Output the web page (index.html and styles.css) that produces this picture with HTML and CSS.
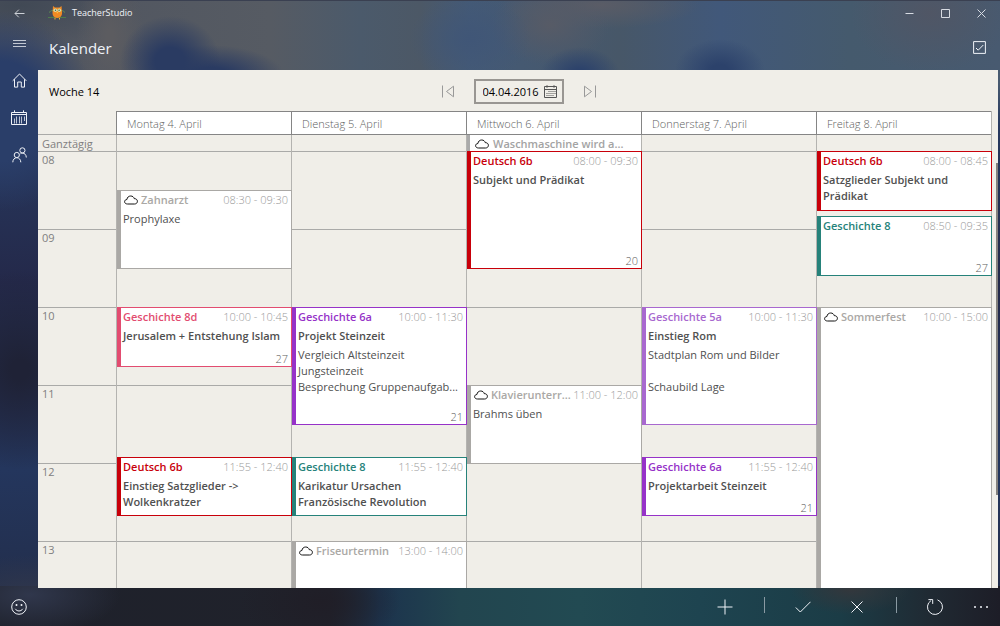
FILE: index.html
```html
<!DOCTYPE html>
<html lang="de">
<head>
<meta charset="utf-8">
<meta name="viewport" content="width=device-width, initial-scale=1">
<title>TeacherStudio</title>
<link rel="stylesheet" href="styles.css">
</head>
<body>
<svg class="sprite" aria-hidden="true">
  <symbol id="cloud" viewBox="0 0 14 10"><path d="M3.6 9C1.8 9 .6 8.1.6 6.7c0-1.300 1-2.100 2.300-2.200C3.200 2.300 4.700 1 6.700 1c1.800 0 3.100 1 3.500 2.600 1.900 0 3.200 1.100 3.200 2.700S12.200 9 10.500 9z"/></symbol>
</svg>
<div class="app">
  <header class="titlebar">
    <button class="back" aria-label="Zurück"><svg width="11" height="9" viewBox="0 0 11 9"><path d="M10.500 4.500H1M4.800.7 1 4.500l3.800 3.800"/></svg></button>
    <svg class="logo" width="18" height="14" viewBox="0 0 18 14" aria-hidden="true">
      <path d="M0 11.500h18" stroke="#4e7d4c" stroke-width="1"/>
      <path d="M1 6.500c2-2 3.500-2.500 5-1.500M17 6.500c-2-2-3.500-2.500-5-1.500" stroke="#5f8f55" fill="none"/>
      <path d="M5 0l2 1.500h4.500L13.500 0 14 5.500c.4 3.500-.8 6.500-4.700 6.500S4.200 9 4.600 5.500z" fill="#f08a24"/>
      <circle cx="7.300" cy="4.300" r="1.800" fill="#cfe3b4"/><circle cx="11.300" cy="4.300" r="1.800" fill="#cfe3b4"/>
      <circle cx="7.500" cy="4.300" r=".7" fill="#4a5a3c"/><circle cx="11.100" cy="4.300" r=".7" fill="#4a5a3c"/>
      <path d="M8.500 6h1.600l-.8 1.500z" fill="#ffd24a"/>
      <path d="M7 12v1.500M11.500 12v1.500" stroke="#f0b030"/>
    </svg>
    <span class="app-name">TeacherStudio</span>
    <div class="window-controls">
      <button aria-label="Minimieren"><svg width="9" height="9" viewBox="0 0 9 9"><path d="M.5 4.500h8"/></svg></button>
      <button aria-label="Maximieren"><svg width="9" height="9" viewBox="0 0 9 9"><path d="M.5.5h8v8h-8z"/></svg></button>
      <button aria-label="Schließen"><svg width="9" height="9" viewBox="0 0 9 9"><path d="M.5.5l8 8M8.500.5l-8 8"/></svg></button>
    </div>
  </header>

  <div class="body">
    <nav class="sidebar" aria-label="Navigation">
      <button aria-label="Menü"><svg class="thin" width="13" height="9" viewBox="0 0 13 9"><path d="M0 1.500h13M0 4.500h13M0 7.500h13"/></svg></button>
      <button aria-label="Start"><svg width="15" height="15" viewBox="0 0 15 15"><path d="M.7 7.800 7.500 1l6.800 6.800M2.500 6.200v7.900h3.200V9h3.600v5.100h3.200V6.200"/></svg></button>
      <button aria-label="Kalender"><svg width="16" height="16" viewBox="0 0 16 16"><path d="M.5 2.500h15v12H.5zM.5 4.500h15M3.500.3V3M12.500.3V3"/><path class="thin" d="M3.500 8.500v5M5.500 6.500v7M8.500 6.500v7M10.500 6.500v7M13.500 6.500V11"/></svg></button>
      <button aria-label="Schüler"><svg width="15" height="16" viewBox="0 0 15 16"><circle cx="4.800" cy="8" r="2.600"/><circle cx="10.400" cy="3.400" r="2.600"/><path d="M.8 15.300c0-2.600 1.700-4.600 4-4.600s4 2 4 4.600M8.500 6.700c.6-.4 1.200-.6 1.900-.6 2.300 0 3.900 1.800 3.900 4.400"/></svg></button>
    </nav>

    <div class="content">
      <div class="page-head">
        <h1>Kalender</h1>
        <button class="select-mode" aria-label="Auswählen"><svg width="13" height="13" viewBox="0 0 13 13"><path d="M.6.6h11.800v11.800H.6z"/><path d="M3 7l2.200 2.200L10.300 4"/></svg></button>
      </div>

      <main class="panel">
        <div class="toolbar">
          <h2>Woche 14</h2>
          <div class="date-nav">
            <button aria-label="Vorherige Woche"><svg width="14" height="13" viewBox="0 0 14 13"><path d="M1.500.5v12M12.500 1.200v10.600L5.500 6.500z"/></svg></button>
            <div class="date-field">
              <input type="text" value="04.04.2016" aria-label="Datum">
              <button aria-label="Datum wählen"><svg width="13" height="13" viewBox="0 0 13 13"><path d="M.5 1.500h12v11H.5zM.5 4.500h12M3 .2v2.600M10 .2v2.600"/><path class="dots" d="M4.500 6.500h7M2.500 8.500h9M2.500 10.500h7"/></svg></button>
            </div>
            <button aria-label="Nächste Woche"><svg width="14" height="13" viewBox="0 0 14 13"><path d="M12.500.5v12M1.500 1.200v10.600l7-5.300z"/></svg></button>
          </div>
        </div>

        <div class="week">
          <div class="corner"></div>
          <h3 class="day-name">Montag 4. April</h3>
          <h3 class="day-name">Dienstag 5. April</h3>
          <h3 class="day-name">Mittwoch 6. April</h3>
          <h3 class="day-name">Donnerstag 7. April</h3>
          <h3 class="day-name">Freitag 8. April</h3>

          <div class="all-day-label">Ganztägig</div>
          <div class="all-day"></div>
          <div class="all-day"></div>
          <div class="all-day all-day-busy"><svg class="cloud"><use href="#cloud"/></svg><span>Waschmaschine wird a...</span></div>
          <div class="all-day"></div>
          <div class="all-day"></div>

          <div class="hours">
            <span>08</span><span>09</span><span>10</span><span>11</span><span>12</span><span>13</span>
          </div>

          <div class="day">
            <article class="event private" style="grid-row:7 / span 12">
              <header><svg class="cloud"><use href="#cloud"/></svg><b>Zahnarzt</b><time>08:30 - 09:30</time></header>
              <p>Prophylaxe</p>
            </article>
            <article class="event pink" style="grid-row:25 / span 9">
              <header><b>Geschichte 8d</b><time>10:00 - 10:45</time></header>
              <h4>Jerusalem + Entstehung Islam</h4>
              <span class="count">27</span>
            </article>
            <article class="event red" style="grid-row:48 / span 9">
              <header><b>Deutsch 6b</b><time>11:55 - 12:40</time></header>
              <h4>Einstieg Satzglieder -&gt;<br>Wolkenkratzer</h4>
            </article>
          </div>

          <div class="day">
            <article class="event purple" style="grid-row:25 / span 18">
              <header><b>Geschichte 6a</b><time>10:00 - 11:30</time></header>
              <h4>Projekt Steinzeit</h4>
              <p>Vergleich Altsteinzeit<br>Jungsteinzeit<br>Besprechung Gruppenaufgab...</p>
              <span class="count">21</span>
            </article>
            <article class="event teal" style="grid-row:48 / span 9">
              <header><b>Geschichte 8</b><time>11:55 - 12:40</time></header>
              <h4>Karikatur Ursachen<br>Französische Revolution</h4>
            </article>
            <article class="event private" style="grid-row:61 / span 12">
              <header><svg class="cloud"><use href="#cloud"/></svg><b>Friseurtermin</b><time>13:00 - 14:00</time></header>
            </article>
          </div>

          <div class="day">
            <article class="event red" style="grid-row:1 / span 18">
              <header><b>Deutsch 6b</b><time>08:00 - 09:30</time></header>
              <h4>Subjekt und Prädikat</h4>
              <span class="count">20</span>
            </article>
            <article class="event private" style="grid-row:37 / span 12">
              <header><svg class="cloud"><use href="#cloud"/></svg><b>Klavierunterr...</b><time>11:00 - 12:00</time></header>
              <p>Brahms üben</p>
            </article>
          </div>

          <div class="day">
            <article class="event lilac" style="grid-row:25 / span 18">
              <header><b>Geschichte 5a</b><time>10:00 - 11:30</time></header>
              <h4>Einstieg Rom</h4>
              <p>Stadtplan Rom und Bilder<br><br>Schaubild Lage</p>
            </article>
            <article class="event purple" style="grid-row:48 / span 9">
              <header><b>Geschichte 6a</b><time>11:55 - 12:40</time></header>
              <h4>Projektarbeit Steinzeit</h4>
              <span class="count">21</span>
            </article>
          </div>

          <div class="day">
            <article class="event red" style="grid-row:1 / span 9">
              <header><b>Deutsch 6b</b><time>08:00 - 08:45</time></header>
              <h4>Satzglieder Subjekt und<br>Prädikat</h4>
            </article>
            <article class="event teal" style="grid-row:11 / span 9">
              <header><b>Geschichte 8</b><time>08:50 - 09:35</time></header>
              <span class="count">27</span>
            </article>
            <article class="event private" style="grid-row:25 / span 60">
              <header><svg class="cloud"><use href="#cloud"/></svg><b>Sommerfest</b><time>10:00 - 15:00</time></header>
            </article>
          </div>
        </div>
        <div class="scroll-thumb"></div>
      </main>
    </div>
  </div>

  <footer class="commands">
    <button class="smile" aria-label="Feedback"><svg width="16" height="16" viewBox="0 0 16 16"><circle cx="8" cy="8" r="7.300"/><path d="M4.200 9.800c1.800 2.900 5.800 2.900 7.600 0"/><path class="eyes" d="M5.500 5.900h.01M10.500 5.900h.01"/></svg></button>
    <button aria-label="Hinzufügen"><svg width="16" height="16" viewBox="0 0 16 16"><path d="M8 .5v15M.5 8h15"/></svg></button>
    <span class="divider"></span>
    <button aria-label="Übernehmen"><svg width="16" height="16" viewBox="0 0 16 16"><path d="M.8 8.500l4.500 4.500L15.500 2.800"/></svg></button>
    <button aria-label="Abbrechen"><svg width="12" height="12" viewBox="0 0 12 12"><path d="M.5.5l11 11M11.500.5l-11 11"/></svg></button>
    <span class="divider"></span>
    <button aria-label="Aktualisieren"><svg width="18" height="18" viewBox="0 0 18 18"><path d="M11.500 1.900A7.500 7.500 0 1 1 5 2.600M2.400 1.600h4.300v4.300"/></svg></button>
    <button class="more" aria-label="Mehr"><svg width="16" height="4" viewBox="0 0 16 4"><path class="eyes" d="M2 2h.01M8 2h.01M14 2h.01"/></svg></button>
  </footer>
</div>
</body>
</html>
```

FILE: styles.css
```css
* { box-sizing: border-box; }

body {
  margin: 0;
  font: 400 11px/16px "Open Sans", "Noto Sans", sans-serif;
  color: #505050;
}

h1, h2, h3, h4, p { margin: 0; font-size: inherit; font-weight: inherit; }

button {
  display: flex;
  align-items: center;
  justify-content: center;
  padding: 0;
  border: 0;
  background: none;
  color: inherit;
}

svg { flex: none; fill: none; stroke: currentColor; stroke-width: 1; }
.sprite { position: absolute; width: 0; height: 0; }
.thin { opacity: .75; }
.eyes { stroke-width: 2; stroke-linecap: round; }

.app {
  display: flex;
  flex-direction: column;
  height: 100vh;
  overflow: hidden;
  color: #f0f3f8;
  border-top: 1px solid #3a4051;
  background:
    radial-gradient(ellipse 50px 45px at 17% 60px, #2a3b62 30%, #2a3b6200),
    radial-gradient(ellipse 75px 32px at 21% 76px, #2a3b62 30%, #2a3b6200),
    radial-gradient(ellipse 40px 28px at 58% 74px, #2c426b 20%, #2c426b00),
    radial-gradient(ellipse 45px 32px at 72% 70px, #2c426b 20%, #2c426b00),
    radial-gradient(ellipse 60px 45px at 47% 38px, #405677, #40567700),
    radial-gradient(ellipse 60px 40px at 55% 24px, #575b66, #575b6600),
    radial-gradient(ellipse 100px 24px at 60% 4px, #5a5c66, #5a5c6600),
    radial-gradient(ellipse 80px 60px at 93% 12px, #505665, #50566500),
    radial-gradient(ellipse 34px 70px at 11% 36px, #5c5c60 10%, #5c5c6000),
    radial-gradient(ellipse 95px 100px at 0% 110px, #2a3e69 50%, #2a3e6900),
    radial-gradient(ellipse 120px 40px at 2% 4px, #414955, #41495500),
    radial-gradient(ellipse 90px 100px at 2% 59%, #1f2236 10%, #1f223600),
    radial-gradient(ellipse 90px 40px at 3% 95%, #30374c, #30374c00),
    radial-gradient(ellipse 80px 50px at 32% 96%, #201e27, #201e2700),
    radial-gradient(ellipse 60px 26px at 85% 94%, #34373c, #34373c00),
    linear-gradient(90deg, #1e212b, #20222b 33%, #1c334d 38%, #22454f 46%, #224a52 58%, #1e4450 70%, #1b3c46 84%, #202a33 93%, #1d1d27) 0 100% / 100% 40px no-repeat,
    linear-gradient(180deg, #24375f00 13%, #27395f 20%, #24294a 45%, #24365d 75%, #222c47),
    linear-gradient(90deg, #4f545f, #565b63 27%, #4b5a6b 36%, #4c5866 42%, #445a76 47%, #475768 62%, #41587a 72%, #455a6d 85%, #485a70);
}

/* Title bar */
.titlebar { display: flex; align-items: center; flex: none; height: 24px; padding-right: 1px; }
.back { width: 38px; height: 24px; opacity: .8; }
.logo { margin: 0 6px 0 10px; stroke: none; }
.app-name { font-size: 9px; }
.window-controls { display: flex; margin-left: auto; opacity: .85; }
.window-controls button { width: 36px; height: 24px; }

.body { display: flex; flex: 1; min-height: 0; }
.sidebar { flex: none; width: 38px; }
.sidebar button { width: 38px; height: 37px; }

.content { display: flex; flex: 1; flex-direction: column; min-width: 0; padding-right: 2px; }
.page-head { display: flex; align-items: center; justify-content: space-between; flex: none; height: 45px; padding: 0 0 0 11px; }
.page-head h1 { font-size: 15px; line-height: 20px; }
.select-mode { width: 37px; height: 37px; }

/* Calendar panel */
.panel { position: relative; flex: 1; min-height: 0; overflow: hidden; padding-right: 6px; background: #f0eee8; color: #505050; }
.toolbar { display: grid; grid-template-columns: 1fr auto 1fr; align-items: center; height: 41px; padding: 2px 4px 0 11px; color: #000; }
.date-nav { display: flex; align-items: center; gap: 10px; }
.date-nav > button { width: 32px; height: 25px; color: #999; }
.date-field { display: flex; align-items: center; width: 90px; height: 25px; padding: 0 5px 0 7px; border: 2px solid #999692; }
.date-field input { flex: 1; min-width: 0; padding: 0; border: 0; outline: 0; background: none; color: #000; font: inherit; }
.date-field button { width: 13px; color: #555; }
.dots { stroke-dasharray: 1 1; }

.week {
  display: grid;
  grid-template-columns: 78px repeat(5, minmax(0, 1fr));
  grid-template-rows: 24px 16px auto;
  border-right: 1px solid #b4b3b0;
}
.corner { border-bottom: 1px solid #aaaaa8; }
.day-name {
  padding: 4px 10px 0;
  border: solid #858585;
  border-width: 1px 0 1px 1px;
  background: #fff;
  color: #606060;
  font-weight: 300;
}
.all-day-label { padding-left: 4px; line-height: 18px; color: #808080; }
.all-day { border-left: 1px solid #b4b3b0; }
.all-day-busy {
  display: flex;
  align-items: center;
  gap: 4px;
  padding: 2px 0 0 8px;
  background: linear-gradient(90deg, #aaa 3px, #fff 3px);
  color: #a3a3a3;
  font-weight: 600;
}

.hours { display: grid; grid-template-rows: repeat(6, 78px); color: #808080; }
.hours span { padding: 0 4px; border-top: 1px solid #aaaaa8; }

/* One row per five minutes, 08:00 to 16:00 */
.day {
  display: grid;
  grid-template-rows: repeat(96, 1fr);
  height: 624px;
  border-left: 1px solid #b4b3b0;
  background: linear-gradient(#aaaaa8 1px, transparent 1px) 0 0 / 100% 78px;
}
.event {
  --tone: #aaa8a5;
  display: flex;
  flex-direction: column;
  gap: 3px;
  min-width: 0;
  min-height: 0;
  margin: 0 -1px -1px 0;
  padding: 1px 3px 0 2px;
  overflow: hidden;
  z-index: 1;
  border: 1px solid var(--tone);
  border-left-width: 4px;
  background: #fff;
  white-space: nowrap;
}
.event header { display: flex; align-items: center; color: var(--tone); }
.event b, .event h4 { font-weight: 600; }
.event time { margin-left: auto; color: #999; font-weight: 300; }
.count { margin-top: auto; align-self: flex-end; line-height: 14px; color: #606060; font-weight: 300; }
.cloud { width: 14px; height: 10px; color: #111; }
.event .cloud { margin: 0 3px 0 1px; }

.red { --tone: #c8000a; }
.pink { --tone: #e24c70; }
.purple { --tone: #9632c8; }
.lilac { --tone: #a868cf; }
.teal { --tone: #26827a; }

.scroll-thumb { position: absolute; top: 18%; right: 0; width: 2px; height: 64%; background: #85827f; }

/* Command bar */
.commands { display: flex; align-items: center; flex: none; height: 38px; }
.commands button { width: 54px; height: 38px; }
.commands .smile { width: 38px; margin-right: auto; }
.commands .more { width: 38px; }
.divider { width: 1px; height: 16px; margin: 0 11px 4px 12px; background: #8a9aa3; }
```
